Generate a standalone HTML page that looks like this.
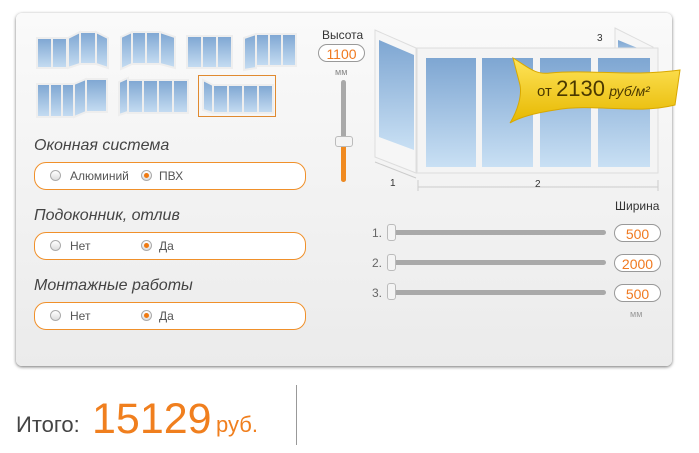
<!DOCTYPE html>
<html><head><meta charset="utf-8"><style>
body{margin:0;width:699px;height:453px;background:#fff;font-family:"Liberation Sans",sans-serif;position:relative;overflow:hidden}
.panel{position:absolute;left:16px;top:13px;width:656px;height:353px;border-radius:6px;background:linear-gradient(#fafafa,#ebebeb);box-shadow:0 1px 3px rgba(0,0,0,.55)}
.a{position:absolute}
.h{position:absolute;font-style:italic;font-size:16px;color:#444}
.box{position:absolute;left:34px;width:270px;height:26px;border:1px solid #f0902a;border-radius:12px;background:#fff}
.rad{position:absolute;top:7px;width:11px;height:11px;border-radius:50%;border:1px solid #aaa;background:linear-gradient(#fff,#ddd);box-sizing:border-box}
.rad.on::after{content:"";position:absolute;left:2px;top:2px;width:5px;height:5px;border-radius:50%;background:#f07a10}
.lb{position:absolute;top:6px;font-size:12px;color:#555}
.pill{position:absolute;width:47px;height:18px;border:1px solid #999;border-radius:10px;background:#fff;color:#f07a20;font-size:14px;text-align:center;line-height:19px;box-sizing:border-box}
.trk{position:absolute;left:390px;width:216px;height:5px;border-radius:3px;background:#a9a9a9}
.th{position:absolute;width:9px;height:17px;border:1px solid #bbb;border-radius:3px;background:#f4f4f4;box-sizing:border-box}
.num{position:absolute;left:372px;font-size:12px;color:#666}
</style></head><body>
<div class="panel"></div>
<svg class="a" style="left:0;top:0" width="300" height="125">
<defs><linearGradient id="g" x1="0" y1="0" x2="0" y2="1"><stop offset="0" stop-color="#7ea6d2"/><stop offset="1" stop-color="#c6ddf2"/></linearGradient></defs>
<g fill="url(#g)" stroke="#eee" stroke-width="2">
<rect x="37" y="38" width="15" height="30"/><rect x="52" y="38" width="15" height="30"/>
<polygon points="68,38 80,32 80,64 68,68"/><rect x="80" y="32" width="16" height="32"/><polygon points="96,32 108,38 108,68 96,64"/>
<polygon points="121,37 132,32 132,64 121,69"/><rect x="132" y="32" width="14" height="32"/><rect x="146" y="32" width="14" height="32"/><polygon points="160,32 175,37 175,68 160,64"/>
<rect x="187" y="36" width="15" height="32"/><rect x="202" y="36" width="15" height="32"/><rect x="217" y="36" width="15" height="32"/>
<polygon points="244,38 256,34 256,68 244,70"/><rect x="256" y="34" width="13" height="32"/><rect x="269" y="34" width="13" height="32"/><rect x="282" y="34" width="14" height="32"/>
<rect x="37" y="84" width="13" height="33"/><rect x="50" y="84" width="12" height="33"/><rect x="62" y="84" width="12" height="33"/><polygon points="74,84 86,79 86,112 74,117"/><rect x="86" y="79" width="21" height="33"/>
<polygon points="119,82 128,78 128,112 119,115"/><rect x="128" y="80" width="15" height="33"/><rect x="143" y="80" width="15" height="33"/><rect x="158" y="80" width="15" height="33"/><rect x="173" y="80" width="15" height="33"/>
<polygon points="203,80 213,85 213,113 203,110"/><rect x="213" y="85" width="15" height="28"/><rect x="228" y="85" width="15" height="28"/><rect x="243" y="85" width="15" height="28"/><rect x="258" y="85" width="15" height="28"/>
</g>
<rect x="198.5" y="75.5" width="77" height="41" fill="none" stroke="#e08a30"/>
</svg>
<div class="h" style="left:34px;top:137px">Оконная система</div>
<div class="box" style="top:162px"><div class="rad" style="left:15px"></div><div class="lb" style="left:35px">Алюминий</div><div class="rad on" style="left:106px"></div><div class="lb" style="left:124px">ПВХ</div></div>
<div class="h" style="left:34px;top:207px">Подоконник, отлив</div>
<div class="box" style="top:232px"><div class="rad" style="left:15px"></div><div class="lb" style="left:35px">Нет</div><div class="rad on" style="left:106px"></div><div class="lb" style="left:124px">Да</div></div>
<div class="h" style="left:34px;top:277px">Монтажные работы</div>
<div class="box" style="top:302px"><div class="rad" style="left:15px"></div><div class="lb" style="left:35px">Нет</div><div class="rad on" style="left:106px"></div><div class="lb" style="left:124px">Да</div></div>
<div class="a" style="left:322px;top:28px;font-size:12px;color:#333">Высота</div>
<div class="pill" style="left:318px;top:44px">1100</div>
<div class="a" style="left:335px;top:67px;font-size:9px;color:#888">мм</div>
<div class="a" style="left:341px;top:80px;width:5px;height:102px;border-radius:3px;background:#a9a9a9"></div>
<div class="a" style="left:341px;top:143px;width:5px;height:39px;border-radius:3px;background:#f08a20"></div>
<div class="th" style="left:335px;top:136px;width:18px;height:11px"></div>
<svg class="a" style="left:360px;top:15px" width="330" height="180">
<defs><linearGradient id="g2" x1="0" y1="0" x2="0" y2="1"><stop offset="0" stop-color="#7ea6d2"/><stop offset="1" stop-color="#c9e0f4"/></linearGradient>
<linearGradient id="y" x1="0" y1="0" x2="0" y2="1"><stop offset="0" stop-color="#ffe45a"/><stop offset="1" stop-color="#e6b800"/></linearGradient></defs>
<polygon points="15,15 56,33 56,158 15,142" fill="#f6f6f6" stroke="#ddd"/>
<polygon points="19,25 54,40 54,135 19,122" fill="url(#g2)"/>
<polygon points="255,13 293,32 293,48 255,48" fill="#f6f6f6" stroke="#ddd"/>
<polygon points="258,25 290,38 290,48 258,48" fill="url(#g2)"/>
<rect x="57" y="33" width="241" height="125" fill="#f4f4f4" stroke="#ddd"/>
<rect x="66" y="43" width="50" height="109" fill="url(#g2)"/><rect x="122" y="43" width="51" height="109" fill="url(#g2)"/>
<rect x="180" y="43" width="51" height="109" fill="url(#g2)"/><rect x="238" y="43" width="52" height="109" fill="url(#g2)"/>
<g stroke="#ccc" fill="none"><line x1="15" y1="147" x2="56" y2="163"/><line x1="58" y1="172" x2="298" y2="172"/><line x1="58" y1="165" x2="58" y2="176"/><line x1="298" y1="165" x2="298" y2="176"/></g>
<text x="30" y="171" font-size="10" fill="#333">1</text><text x="175" y="172" font-size="10" fill="#333">2</text><text x="237" y="26" font-size="10" fill="#333">3</text>
<path d="M153,43 C168,52 175,60 190,58 C230,54 270,62 320,55 L315,90 C275,100 235,88 195,95 C175,98 160,102 150,108 C158,95 162,80 160,70 Z" fill="url(#y)" stroke="#d9a800"/>
<text x="177" y="81" font-size="15" fill="#4a3800">от <tspan font-size="22">2130</tspan> <tspan font-style="italic" font-size="14">руб/м²</tspan></text>
</svg>
<div class="a" style="left:615px;top:199px;font-size:12px;color:#333">Ширина</div>
<div class="num" style="top:226px">1.</div><div class="trk" style="top:230px"></div><div class="th" style="left:387px;top:224px"></div><div class="pill" style="left:614px;top:224px">500</div>
<div class="num" style="top:256px">2.</div><div class="trk" style="top:260px"></div><div class="th" style="left:387px;top:254px"></div><div class="pill" style="left:614px;top:254px">2000</div>
<div class="num" style="top:286px">3.</div><div class="trk" style="top:290px"></div><div class="th" style="left:387px;top:283px"></div><div class="pill" style="left:614px;top:284px">500</div>
<div class="a" style="left:630px;top:309px;font-size:9px;color:#999">мм</div>
<div class="a" style="left:16px;top:412px;font-size:22px;color:#444">Итого:</div>
<div class="a" style="left:92px;top:395px;font-size:43px;color:#f07f1e">15129</div>
<div class="a" style="left:216px;top:412px;font-size:22px;color:#f07f1e">руб.</div>
<div class="a" style="left:296px;top:385px;width:1px;height:60px;background:#999"></div>
</body></html>
